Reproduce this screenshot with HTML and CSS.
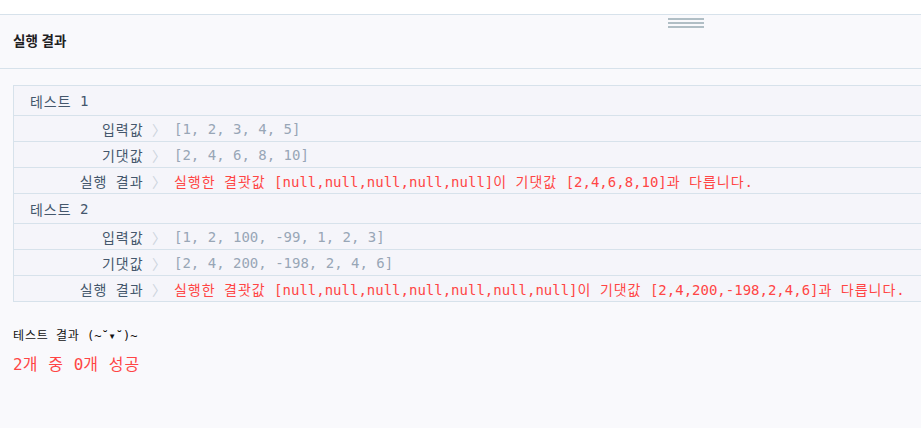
FILE: index.html
```html
<!DOCTYPE html>
<html lang="ko">
<head>
<meta charset="utf-8">
<link rel="stylesheet" href="styles.css">
</head>
<body>
<div class="topbar"></div>
<section class="panel">
  <div class="handle"><span></span><span></span><span></span></div>
  <header class="panel-head">실행 결과</header>
  <div class="panel-body">
    <div class="console">
      <div class="test-title"><span class="k">테스트</span> 1</div>
      <div class="row"><span class="label"><span class="k">입력값</span> <i>〉</i></span><span class="val">[1, 2, 3, 4, 5]</span></div>
      <div class="row"><span class="label"><span class="k">기댓값</span> <i>〉</i></span><span class="val">[2, 4, 6, 8, 10]</span></div>
      <div class="row"><span class="label"><span class="k">실행</span> <span class="k">결과</span> <i>〉</i></span><span class="val err"><span class="k">실행한</span> <span class="k">결괏값</span> [null,null,null,null,null]<span class="k">이</span> <span class="k">기댓값</span> [2,4,6,8,10]<span class="k">과</span> <span class="k">다릅니다</span>.</span></div>
      <div class="test-title"><span class="k">테스트</span> 2</div>
      <div class="row"><span class="label"><span class="k">입력값</span> <i>〉</i></span><span class="val">[1, 2, 100, -99, 1, 2, 3]</span></div>
      <div class="row"><span class="label"><span class="k">기댓값</span> <i>〉</i></span><span class="val">[2, 4, 200, -198, 2, 4, 6]</span></div>
      <div class="row last"><span class="label"><span class="k">실행</span> <span class="k">결과</span> <i>〉</i></span><span class="val err"><span class="k">실행한</span> <span class="k">결괏값</span> [null,null,null,null,null,null,null]<span class="k">이</span> <span class="k">기댓값</span> [2,4,200,-198,2,4,6]<span class="k">과</span> <span class="k">다릅니다</span>.</span></div>
    </div>
    <div class="summary">
      <div class="summary-title"><span class="k">테스트</span> <span class="k">결과</span> (~˘▾˘)~</div>
      <div class="summary-count">2<span class="k">개</span> <span class="k">중</span> 0<span class="k">개</span> <span class="k">성공</span></div>
    </div>
  </div>
</section>
</body>
</html>
```
FILE: styles.css
```css
* { box-sizing: border-box; }
html, body { margin: 0; padding: 0; }
body {
  width: 921px;
  height: 428px;
  overflow: hidden;
  background: #f9f9fc;
  font-family: "DejaVu Sans Mono", "Noto Sans CJK KR", monospace;
}
.k { letter-spacing: 0.071em; }
.topbar {
  height: 15px;
  background: #ffffff;
  border-bottom: 1px solid #d7e2eb;
}
.panel {
  position: relative;
}
.handle {
  position: absolute;
  left: 668px;
  top: 3px;
  width: 36px;
  display: flex;
  flex-direction: column;
  gap: 2px;
}
.handle span {
  display: block;
  height: 2px;
  background: #b0bec5;
}
.panel-head {
  height: 54px;
  display: flex;
  align-items: center;
  padding: 0 13px 4px;
  font-family: "Noto Sans CJK KR", "Noto Sans", sans-serif;
  font-weight: 700;
  font-size: 13.5px;
  color: #1e2022;
  border-bottom: 1px solid #d7e2eb;
}
.panel-body {
  padding: 16px 0 0 13px;
}
.console {
  background: #f5f5fa;
  border: 1px solid #d7e2eb;
  border-right: none;
  font-size: 14px;
  color: #44576c;
  overflow: hidden;
}
.test-title {
  height: 30px;
  padding: 0 16px;
  display: flex;
  align-items: center;
  border-bottom: 1px solid #d7e2eb;
  white-space: pre;
}
.row {
  height: 26px;
  display: flex;
  align-items: center;
  gap: 8px;
  border-bottom: 1px solid #d7e2eb;
  white-space: nowrap;
}
.row.last { border-bottom: none; height: 25px; }
.label {
  width: 152px;
  flex: none;
  text-align: right;
}
.label i {
  font-style: normal;
  color: #ccd4dd;
  font-family: "Noto Sans CJK KR", sans-serif;
}
.val { color: #98a6b6; }
.val.err { color: #ff4545; }
.summary {
  padding-top: 26px;
}
.summary-title {
  font-size: 12px;
  color: #111;
  line-height: 16px;
}
.summary-count {
  margin-top: 11px;
  font-size: 16px;
  color: #ff4545;
  line-height: 20px;
}
```
